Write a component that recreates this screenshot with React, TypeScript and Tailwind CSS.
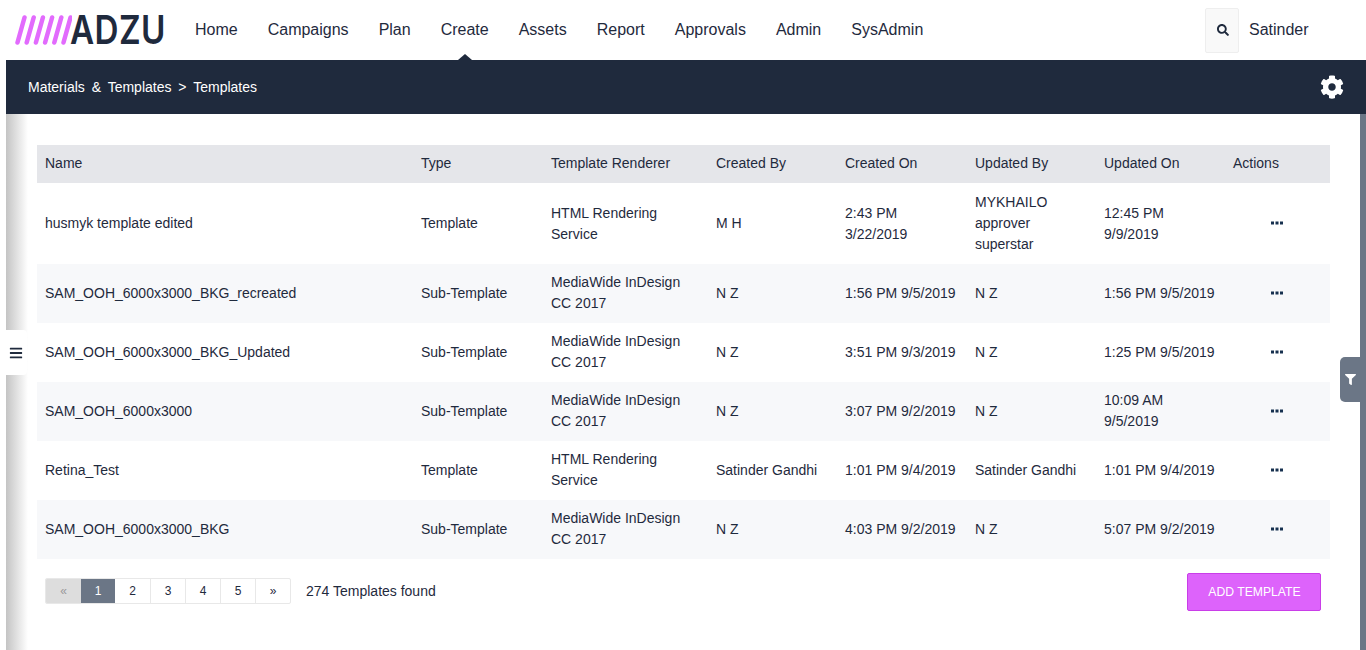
import { FaBars, FaCog, FaFilter, FaSearch } from 'react-icons/fa';

const navItems = ['Home', 'Campaigns', 'Plan', 'Create', 'Assets', 'Report', 'Approvals', 'Admin', 'SysAdmin'];

interface Row {
  name: string;
  type: string;
  renderer: string;
  createdBy: string;
  createdOn: string;
  updatedBy: string;
  updatedOn: string;
  tall?: boolean;
  striped?: boolean;
  wrapsUpdatedOn?: boolean;
}

const rows: Row[] = [
  {
    name: 'husmyk template edited',
    type: 'Template',
    renderer: 'HTML Rendering Service',
    createdBy: 'M H',
    createdOn: '2:43 PM 3/22/2019',
    updatedBy: 'MYKHAILO approver superstar',
    updatedOn: '12:45 PM 9/9/2019',
    tall: true,
  },
  {
    name: 'SAM_OOH_6000x3000_BKG_recreated',
    type: 'Sub-Template',
    renderer: 'MediaWide InDesign CC 2017',
    createdBy: 'N Z',
    createdOn: '1:56 PM 9/5/2019',
    updatedBy: 'N Z',
    updatedOn: '1:56 PM 9/5/2019',
    striped: true,
  },
  {
    name: 'SAM_OOH_6000x3000_BKG_Updated',
    type: 'Sub-Template',
    renderer: 'MediaWide InDesign CC 2017',
    createdBy: 'N Z',
    createdOn: '3:51 PM 9/3/2019',
    updatedBy: 'N Z',
    updatedOn: '1:25 PM 9/5/2019',
  },
  {
    name: 'SAM_OOH_6000x3000',
    type: 'Sub-Template',
    renderer: 'MediaWide InDesign CC 2017',
    createdBy: 'N Z',
    createdOn: '3:07 PM 9/2/2019',
    updatedBy: 'N Z',
    updatedOn: '10:09 AM 9/5/2019',
    striped: true,
    wrapsUpdatedOn: true,
  },
  {
    name: 'Retina_Test',
    type: 'Template',
    renderer: 'HTML Rendering Service',
    createdBy: 'Satinder Gandhi',
    createdOn: '1:01 PM 9/4/2019',
    updatedBy: 'Satinder Gandhi',
    updatedOn: '1:01 PM 9/4/2019',
  },
  {
    name: 'SAM_OOH_6000x3000_BKG',
    type: 'Sub-Template',
    renderer: 'MediaWide InDesign CC 2017',
    createdBy: 'N Z',
    createdOn: '4:03 PM 9/2/2019',
    updatedBy: 'N Z',
    updatedOn: '5:07 PM 9/2/2019',
    striped: true,
  },
];

function Logo() {
  return (
    <div className="flex w-[152px] items-center">
      <svg width="58" height="30" viewBox="0 0 58 30" className="shrink-0">
        {[0, 1, 2, 3, 4, 5].map((i) => (
          <line
            key={i}
            x1={3.5 + i * 9.2}
            y1={27.5}
            x2={10.5 + i * 9.2}
            y2={2.5}
            stroke="#e26bfd"
            strokeWidth={4.5}
            strokeLinecap="round"
          />
        ))}
      </svg>
      <span className="ml-[-2px] origin-left scale-x-[0.83] font-['Inter',sans-serif] text-[40px] leading-none font-semibold tracking-[0.5px] text-[#1f2a3d]">
        ADZU
      </span>
    </div>
  );
}

function Header() {
  return (
    <header className="flex h-[60px] items-center bg-white pl-[14px]">
      <Logo />
      <nav className="ml-[29px] flex gap-[30px] text-base text-[#1f2a3d]">
        {navItems.map((item) => (
          <a key={item} className="relative leading-[60px]">
            {item}
            {item === 'Create' && (
              <span className="absolute bottom-0 left-1/2 ml-[-7px] border-x-[7px] border-b-[6px] border-x-transparent border-b-[#1f2a3d]" />
            )}
          </a>
        ))}
      </nav>
      <div className="ml-auto flex w-[161px] items-center text-base text-[#1f2a3d]">
        <button className="flex h-[45px] w-[34px] items-center justify-center rounded-[2px] border border-[#eeeeee] bg-[#f9f9f9] pl-px">
          <FaSearch className="text-[12px]" />
        </button>
        <span className="ml-[10px]">Satinder</span>
      </div>
    </header>
  );
}

function ActionDots() {
  return (
    <svg width="12" height="4" viewBox="0 0 12 4" className="ml-[38px] fill-[#16304f]">
      <rect x="0" y="0.5" width="3" height="3" />
      <rect x="4.5" y="0.5" width="3" height="3" />
      <rect x="9" y="0.5" width="3" height="3" />
    </svg>
  );
}

function TemplatesTable() {
  const cell = 'px-2 align-middle font-normal';
  return (
    <table className="w-[1293px] table-fixed border-collapse text-left text-sm leading-[21px] text-[#1f2a3d]">
      <colgroup>
        <col className="w-[376px]" />
        <col className="w-[130px]" />
        <col className="w-[165px]" />
        <col className="w-[129px]" />
        <col className="w-[130px]" />
        <col className="w-[129px]" />
        <col className="w-[129px]" />
        <col />
      </colgroup>
      <thead>
        <tr className="h-[38px] bg-[#e5e6ea]">
          {['Name', 'Type', 'Template Renderer', 'Created By', 'Created On', 'Updated By', 'Updated On', 'Actions'].map(
            (label) => (
              <th key={label} className={`${cell} pb-[2px]`}>
                {label}
              </th>
            ),
          )}
        </tr>
      </thead>
      <tbody>
        {rows.map((row) => (
          <tr
            key={row.name}
            className={`${row.tall ? 'h-[81px]' : 'h-[59px]'} ${row.striped ? 'bg-[#f7f8fa]' : 'bg-white'}`}
          >
            <td className={cell}>{row.name}</td>
            <td className={cell}>{row.type}</td>
            {/* two-line cells sit a pixel higher in the short rows */}
            <td className={`${cell} ${row.tall ? '' : 'pb-[2px]'}`}>{row.renderer}</td>
            <td className={cell}>{row.createdBy}</td>
            <td className={cell}>{row.createdOn}</td>
            <td className={cell}>{row.updatedBy}</td>
            <td className={`${cell} ${row.wrapsUpdatedOn ? 'pb-[2px]' : ''}`}>{row.updatedOn}</td>
            <td className={`${cell} pb-[2px]`}>
              <ActionDots />
            </td>
          </tr>
        ))}
      </tbody>
    </table>
  );
}

function Pagination() {
  return (
    <ul className="flex h-[26px] overflow-hidden rounded-[2px] border border-[#e8e8e8] text-xs leading-[24px] text-[#1f2a3d]">
      <li className="w-[35px] bg-[#dddddd] text-center text-[#999999]">«</li>
      <li className="w-[34px] bg-[#6b7686] text-center text-white">1</li>
      {['2', '3', '4', '5', '»'].map((page, i) => (
        <li key={page} className={`w-[35px] text-center ${i > 0 ? 'border-l border-[#e8e8e8]' : ''}`}>
          {page}
        </li>
      ))}
    </ul>
  );
}

export default function App() {
  return (
    <div className="relative h-[650px] w-[1366px] overflow-hidden bg-white font-['Liberation_Sans',Arial,sans-serif]">
      <Header />
      <div className="pl-[6px]">
        <div className="flex h-[54px] items-center justify-between bg-[#1f2a3d] pr-[22px] pl-[22px] text-sm text-white">
          <span className="[word-spacing:3px]">Materials &amp; Templates {'>'} Templates</span>
          <FaCog className="text-[24px]" />
        </div>
        <main className="h-[536px] border-r-[6px] border-[#6b7686] bg-[linear-gradient(to_right,#c4c4c4,#ffffff_22px)] pt-[31px] pl-[31px]">
          <TemplatesTable />
          <div className="mt-[14px] flex items-start pr-[39px] pl-2">
            <div className="mt-[5px] flex items-center">
              <Pagination />
              <span className="ml-[15px] text-sm text-[#1f2a3d]">274 Templates found</span>
            </div>
            <button className="ml-auto h-[38px] w-[134px] rounded-[2px] border border-[#c93ee8] bg-[#dd63fb] pl-px text-[12.2px] text-white">
              ADD TEMPLATE
            </button>
          </div>
        </main>
      </div>

      {/* sidebar toggle */}
      <button className="absolute top-[330px] left-[6px] flex h-[45px] w-[21px] items-center justify-center rounded-r-[4px] bg-white pr-[2px] text-[#1f2a3d]">
        <FaBars className="text-[14px]" />
      </button>
      {/* filter tab */}
      <button className="absolute top-[357px] right-[6px] flex h-[45px] w-[20px] items-center justify-center rounded-l-[5px] bg-[#6b7686] text-white">
        <FaFilter className="text-[11px]" />
      </button>
    </div>
  );
}
